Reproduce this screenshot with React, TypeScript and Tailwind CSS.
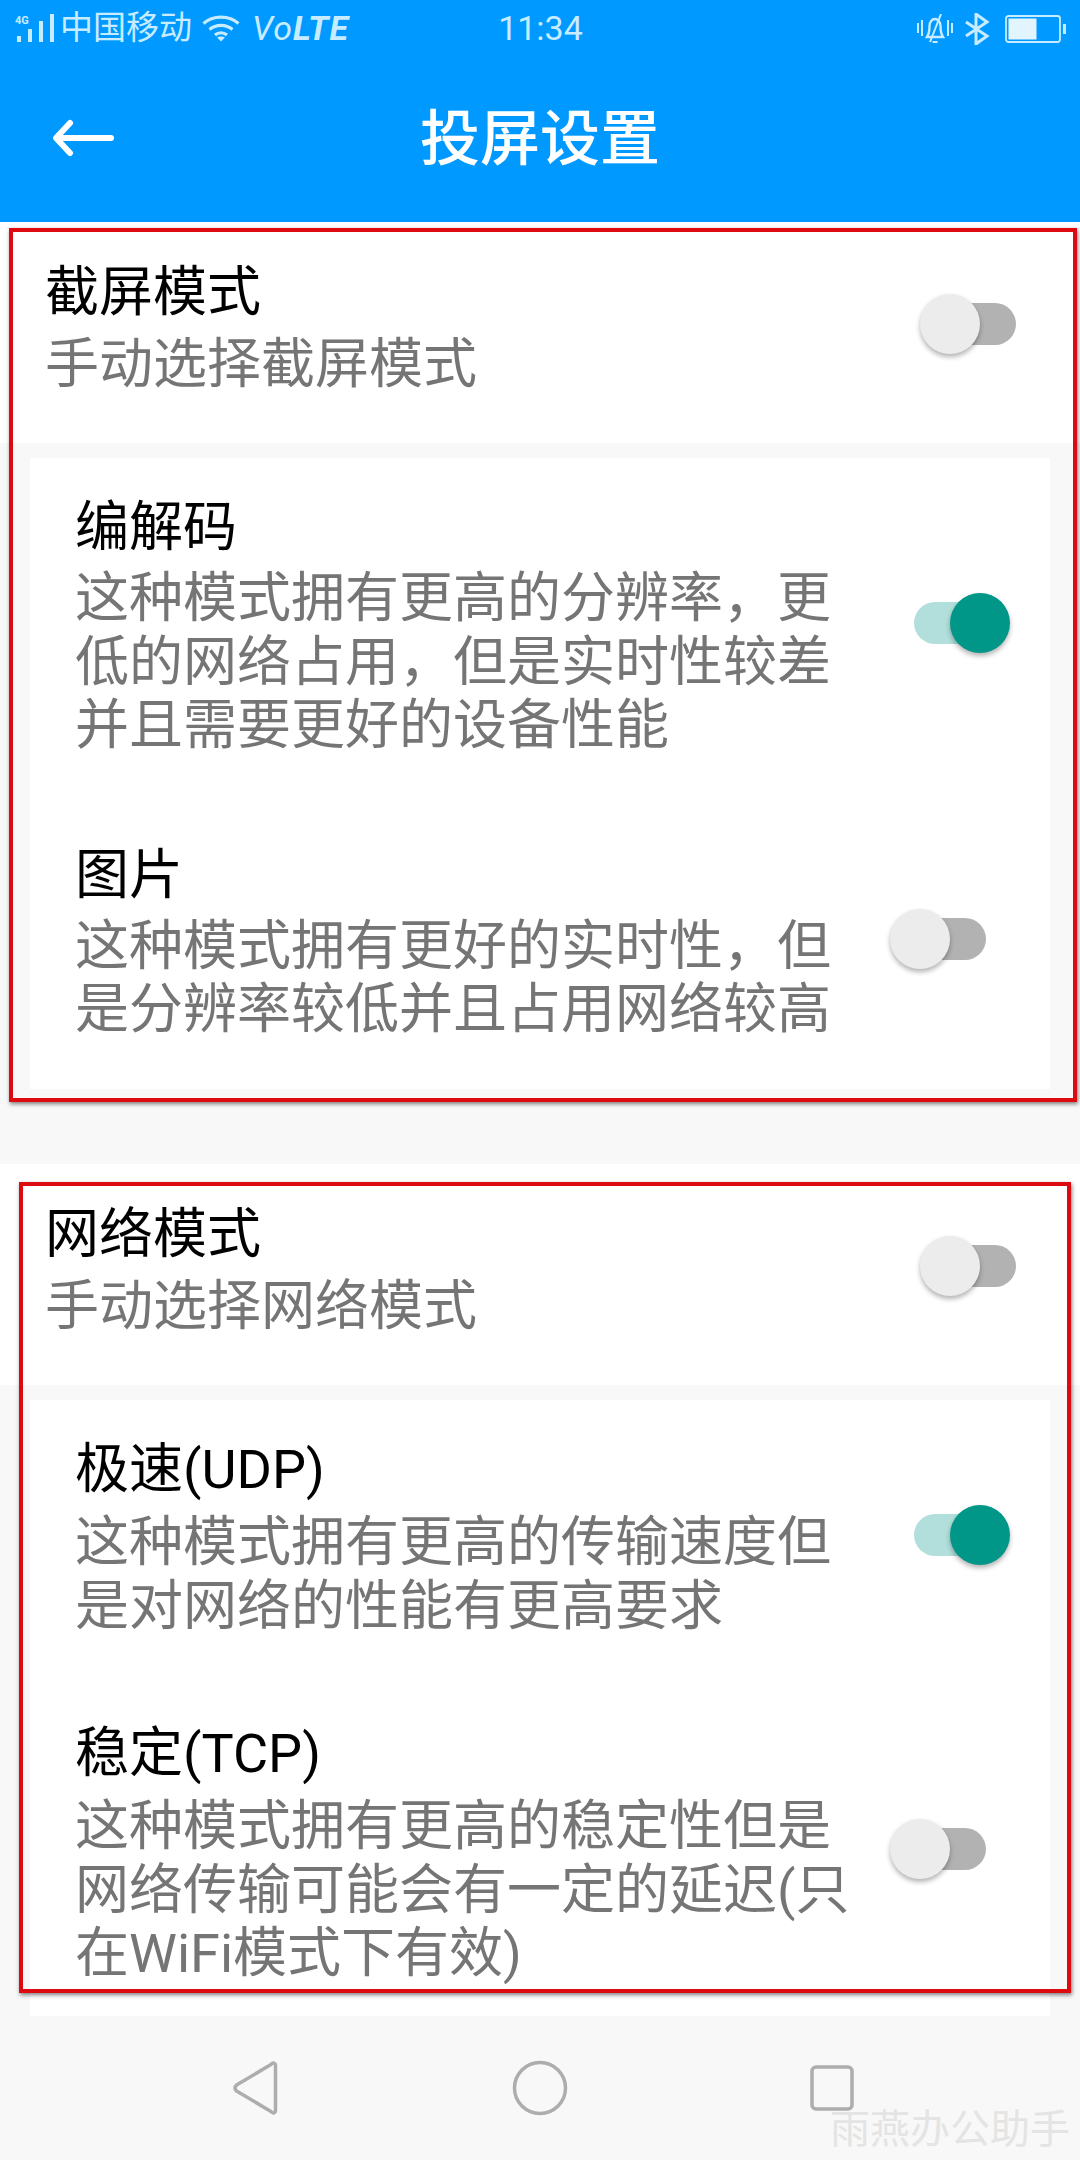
import React from "react";

const FONT = "font-['Roboto','Noto_Sans_CJK_SC',sans-serif]";

function Toggle({ on, className }: { on?: boolean; className: string }) {
  return (
    <div className={`relative w-[96px] h-[60px] shrink-0 flex items-center ${className}`}>
      {on ? (
        <>
          <div className="w-[84px] h-[42px] rounded-full bg-[#b2dfdb]" />
          <div className="absolute right-0 top-0 w-[60px] h-[60px] rounded-full bg-[#009688] shadow-[0_3px_5px_rgba(0,0,0,0.3)]" />
        </>
      ) : (
        <>
          <div className="ml-[12px] w-[84px] h-[42px] rounded-full bg-[#b2b2b2]" />
          <div className="absolute left-0 top-0 w-[60px] h-[60px] rounded-full bg-[#ececec] shadow-[0_3px_5px_rgba(0,0,0,0.3)]" />
        </>
      )}
    </div>
  );
}

function Option({
  title,
  desc,
  on,
  toggleClass,
  rowClass,
  descClass,
}: {
  title: string;
  desc: string;
  on?: boolean;
  toggleClass: string;
  rowClass: string;
  descClass: string;
}) {
  return (
    <div className={`flex items-center pl-[45px] ${rowClass}`}>
      <div className="w-[780px]">
        <div className="text-[54px] leading-[72px] text-black">{title}</div>
        <div className={`text-[54px] leading-[63.5px] text-[#757575] ${descClass}`}>{desc}</div>
      </div>
      <Toggle on={on} className={`ml-auto ${toggleClass}`} />
    </div>
  );
}

function Section({
  title,
  sub,
  children,
  cardClass,
}: {
  title: string;
  sub: string;
  children: React.ReactNode;
  cardClass: string;
}) {
  return (
    <section>
      <div className="h-[221px] bg-white flex items-start pl-[45px] pr-[64px] pt-[35px]">
        <div>
          <div className="text-[54px] leading-[72px] text-black">{title}</div>
          <div className="text-[54px] leading-[72px] text-[#757575]">{sub}</div>
        </div>
        <Toggle className="ml-auto mt-[37px]" />
      </div>
      <div className="px-[30px] pt-[15px]">
        <div className={`bg-white ${cardClass}`}>{children}</div>
      </div>
    </section>
  );
}

function StatusBar() {
  return (
    <div className="h-[60px] grid grid-cols-[1fr_auto_1fr] items-center text-[#c8ecff] pl-[15px] pr-[14px] pb-[5px]">
      <div className="flex items-center">
        <svg width="42" height="32" viewBox="0 0 42 32" className="shrink-0 mt-[5px]">
          <rect x="2" y="22" width="4" height="6" fill="currentColor" />
          <rect x="13" y="15" width="4" height="13" fill="currentColor" />
          <rect x="24" y="7" width="4" height="21" fill="currentColor" />
          <rect x="35" y="0" width="4" height="28" fill="currentColor" />
          <text x="0" y="10" fontSize="11" fontWeight="700" fill="currentColor" fontFamily="Roboto">4G</text>
        </svg>
        <span className="ml-[3px] text-[33px] leading-[40px]">中国移动</span>
        <svg width="38" height="28" viewBox="0 0 38 28" className="ml-[10px]" fill="none" stroke="currentColor" strokeWidth="3.2">
          <path d="M1.5 9.5C11 1 27 1 36.5 9.5" />
          <path d="M7.5 15.5C14 10 24 10 30.5 15.5" />
          <path d="M13 21C16.5 18 21.500 18 25 21" />
          <path d="M19 27.500L15 23.500C17 22 21 22 23 23.500Z" fill="currentColor" stroke="none" />
        </svg>
        <span className="ml-[12px] text-[34px] leading-[40px] italic font-['Roboto',sans-serif] tracking-[1px]">
          Vo<span className="font-bold">LTE</span>
        </span>
      </div>
      <span className="text-[34px] leading-[40px] font-['Roboto',sans-serif]">11:34</span>
      <div className="flex items-center justify-end mt-[2px]">
        <svg width="36" height="30" viewBox="0 0 36 30" fill="none" stroke="currentColor" strokeWidth="2">
          <path d="M1 9V19M5 6V22M31 6V22M35 9V19" />
          <path d="M10 23C12 20 12.500 17 12.500 12C12.500 8 15 5 18 5C21 5 23.500 8 23.500 12C23.500 17 24 20 26 23Z" strokeWidth="2.400" />
          <path d="M13 28L24 0" strokeWidth="2" />
          <path d="M15.500 28H20.500" strokeWidth="2" />
        </svg>
        <svg width="26" height="32" viewBox="0 0 26 32" className="ml-[11px]" fill="none" stroke="currentColor" strokeWidth="3">
          <path d="M2 9L23 23L12 31V1L23 9L2 23" />
        </svg>
        <svg width="61" height="28" viewBox="0 0 61 28" className="ml-[15px]">
          <rect x="1" y="1" width="54" height="26" rx="2.500" fill="none" stroke="currentColor" strokeWidth="1.800" />
          <rect x="3.500" y="3.500" width="28" height="21" fill="#e2f5ff" />
          <rect x="58" y="9" width="3" height="10" fill="currentColor" />
        </svg>
      </div>
    </div>
  );
}

function NavBar() {
  return (
    <div className="mt-auto h-[144px] relative">
      <div className="pl-[233px] pt-[44px] flex items-center">
        <svg width="46" height="54" viewBox="0 0 46 54" fill="none" stroke="#adadad" strokeWidth="3.500" strokeLinejoin="round">
          <path d="M42.500 5C42.500 2 40 1 38 3.500L3.500 24C1.500 26 1.500 28 3.500 30L38 50.500C40 53 42.500 52 42.500 49Z" />
        </svg>
        <svg width="56" height="56" viewBox="0 0 56 56" className="ml-[233px]" fill="none" stroke="#adadad" strokeWidth="3.500">
          <circle cx="28" cy="28" r="25.500" />
        </svg>
        <svg width="44" height="46" viewBox="0 0 44 46" className="ml-[242px]" fill="none" stroke="#adadad" strokeWidth="3.500">
          <rect x="2" y="2" width="40" height="42" rx="4" />
        </svg>
      </div>
      <span className="absolute right-[10px] bottom-[10px] text-[40px] leading-[40px] text-[#e4e4e4] font-['Liberation_Serif','Noto_Sans_CJK_SC',serif]">
        雨燕办公助手
      </span>
    </div>
  );
}

export default function App() {
  return (
    <div className={`relative w-[1080px] h-[2160px] overflow-hidden flex flex-col bg-[#f8f8f8] ${FONT}`}>
      <header className="h-[222px] bg-[#0099ff] shrink-0">
        <StatusBar />
        <div className="h-[162px] relative flex items-center justify-center pb-[2px]">
          <svg width="62" height="38" viewBox="0 0 62 38" className="absolute left-[52px] top-[59px]" fill="none" stroke="#ffffff" strokeWidth="6" strokeLinecap="round" strokeLinejoin="round">
            <path d="M59 19H5M18 4L4 19L18 34" />
          </svg>
          <h1 className="text-[60px] leading-[80px] font-medium text-white">投屏设置</h1>
        </div>
      </header>

      <Section title="截屏模式" sub="手动选择截屏模式" cardClass="h-[631px] pt-[34px]">
        <Option
          title="编解码"
          desc="这种模式拥有更高的分辨率，更低的网络占用，但是实时性较差并且需要更好的设备性能"
          on
          descClass="mt-[3px]"
          toggleClass="mr-[40px] mb-[4px]"
          rowClass="mb-[82px]"
        />
        <Option
          title="图片"
          desc="这种模式拥有更好的实时性，但是分辨率较低并且占用网络较高"
          descClass="mt-[3px]"
          toggleClass="mr-[64px] mb-[3px]"
          rowClass=""
        />
      </Section>

      <div className="h-[75px] shrink-0" />

      <Section title="网络模式" sub="手动选择网络模式" cardClass="h-[616px] pt-[34px]">
        <Option
          title="极速(UDP)"
          desc="这种模式拥有更高的传输速度但是对网络的性能有更高要求"
          on
          descClass="mt-[5px]"
          toggleClass="mr-[40px] mb-[2px]"
          rowClass="mb-[80px]"
        />
        <Option
          title="稳定(TCP)"
          desc="这种模式拥有更高的稳定性但是网络传输可能会有一定的延迟(只在WiFi模式下有效)"
          descClass="mt-[5px]"
          toggleClass="mr-[64px] mb-[6px]"
          rowClass=""
        />
      </Section>

      <NavBar />

      {/* Red highlight frames drawn over the two settings groups */}
      <div className="absolute left-[9px] top-[228px] w-[1068px] h-[874px] border-[4px] border-[#dd0a0f] shadow-[1px_2px_4px_rgba(0,0,0,0.5)] pointer-events-none" />
      <div className="absolute left-[19px] top-[1182px] w-[1052px] h-[811px] border-[4px] border-[#dd0a0f] shadow-[1px_2px_4px_rgba(0,0,0,0.5)] pointer-events-none" />
    </div>
  );
}
